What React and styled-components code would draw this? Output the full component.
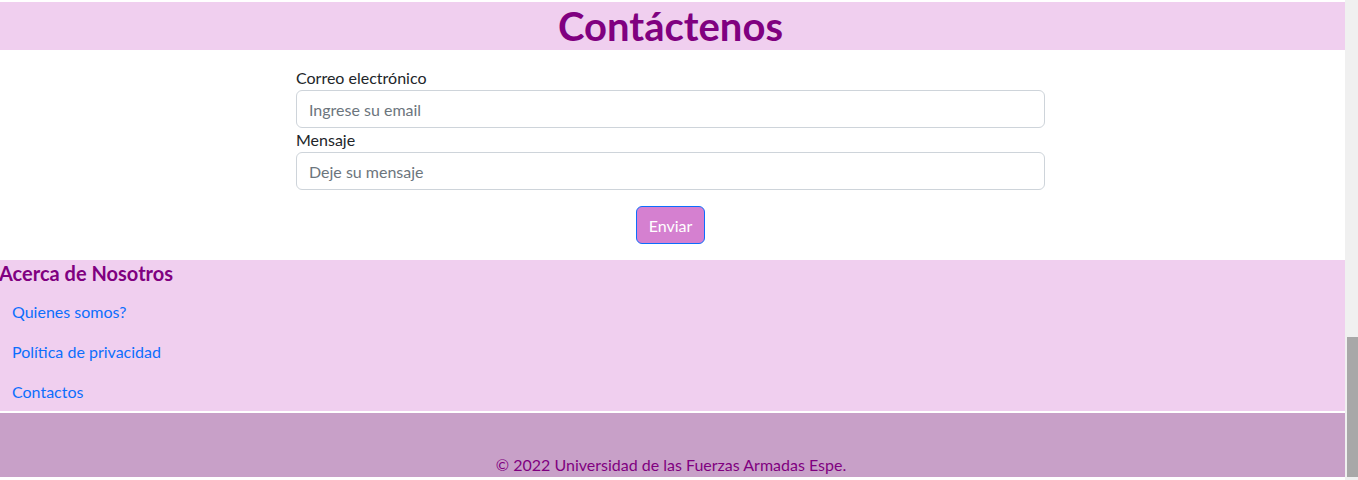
import React from 'react';
import styled, { createGlobalStyle } from 'styled-components';

const GlobalStyle = createGlobalStyle`
  html, body {
    margin: 0;
    padding: 0;
    overflow: hidden;
    background: #fff;
  }
  body {
    font-family: Lato, "Noto Sans", sans-serif;
    font-size: 16px;
    color: #212529;
  }
  * { box-sizing: border-box; }
`;

const Shell = styled.div`
  display: flex;
  height: 480px;
`;

const Page = styled.div`
  flex: 1;
  display: flex;
  flex-direction: column;
  padding-top: 2px;
  background: #fff;
`;

const Header = styled.header`
  height: 48px;
  padding-right: 4px;
  background-color: #f0cfef;
  display: flex;
  align-items: center;
  justify-content: center;
`;

const Title = styled.h1`
  margin: 0;
  font-size: 40px;
  font-weight: 700;
  line-height: 1.2;
  color: #800080;
`;

const FormSection = styled.section`
  display: flex;
  justify-content: center;
  padding: 16px 4px 16px 0;
`;

const Form = styled.form`
  width: 749px;
  display: flex;
  flex-direction: column;
`;

const Label = styled.label`
  line-height: 24px;
  color: #212529;
`;

const Input = styled.input`
  height: 38px;
  padding: 6px 12px;
  font-family: inherit;
  font-size: 16px;
  border: 1px solid #ced4da;
  border-radius: 6px;
  outline: none;
  &::placeholder { color: #6c757d; }
`;

const ButtonRow = styled.div`
  display: flex;
  justify-content: center;
  margin-top: 16px;
`;

const Button = styled.button`
  height: 38px;
  padding: 0 12px;
  font-family: inherit;
  font-size: 16px;
  color: #fff;
  background-color: #d580d0;
  border: 1px solid #0d6efd;
  border-radius: 6px;
`;

const About = styled.section`
  background-color: #f0cfef;
  padding-top: 1px;
  height: 151px;
`;

const AboutTitle = styled.h5`
  margin: 0 0 7px -1px;
  font-size: 20px;
  font-weight: 700;
  line-height: 24px;
  color: #800080;
`;

const NavList = styled.ul`
  list-style: none;
  margin: 0;
  padding: 0;
`;

const NavLink = styled.a`
  display: block;
  padding: 8px 12px;
  line-height: 24px;
  color: #0d6efd;
  text-decoration: none;
`;

const Divider = styled.div`
  height: 2px;
  background: #fff;
`;

const Bottom = styled.footer`
  height: 64px;
  padding-right: 3px;
  background-color: #c8a0c8;
  display: flex;
  align-items: flex-end;
  justify-content: center;
`;

const Copy = styled.p`
  margin: 0;
  line-height: 24px;
  color: #800080;
`;

const ScrollTrack = styled.div`
  width: 13px;
  background: #f0f0f0;
  display: flex;
  justify-content: flex-end;
  padding-top: 337px;
  padding-bottom: 3px;
`;

const ScrollThumb = styled.div`
  width: 11px;
  height: 100%;
  background: #a8a8a8;
`;

const links = ['Quienes somos?', 'Política de privacidad', 'Contactos'];

export default function App() {
  return (
    <>
      <GlobalStyle />
      <Shell>
        <Page>
          <Header>
            <Title>Contáctenos</Title>
          </Header>
          <FormSection>
            <Form onSubmit={e => e.preventDefault()}>
              <Label>Correo electrónico</Label>
              <Input type="email" placeholder="Ingrese su email" />
              <Label>Mensaje</Label>
              <Input type="text" placeholder="Deje su mensaje" />
              <ButtonRow>
                <Button type="submit">Enviar</Button>
              </ButtonRow>
            </Form>
          </FormSection>
          <About>
            <AboutTitle>Acerca de Nosotros</AboutTitle>
            <NavList>
              {links.map(l => (
                <li key={l}><NavLink href="#">{l}</NavLink></li>
              ))}
            </NavList>
          </About>
          <Divider />
          <Bottom>
            <Copy>© 2022 Universidad de las Fuerzas Armadas Espe.</Copy>
          </Bottom>
        </Page>
        <ScrollTrack>
          <ScrollThumb />
        </ScrollTrack>
      </Shell>
    </>
  );
}
